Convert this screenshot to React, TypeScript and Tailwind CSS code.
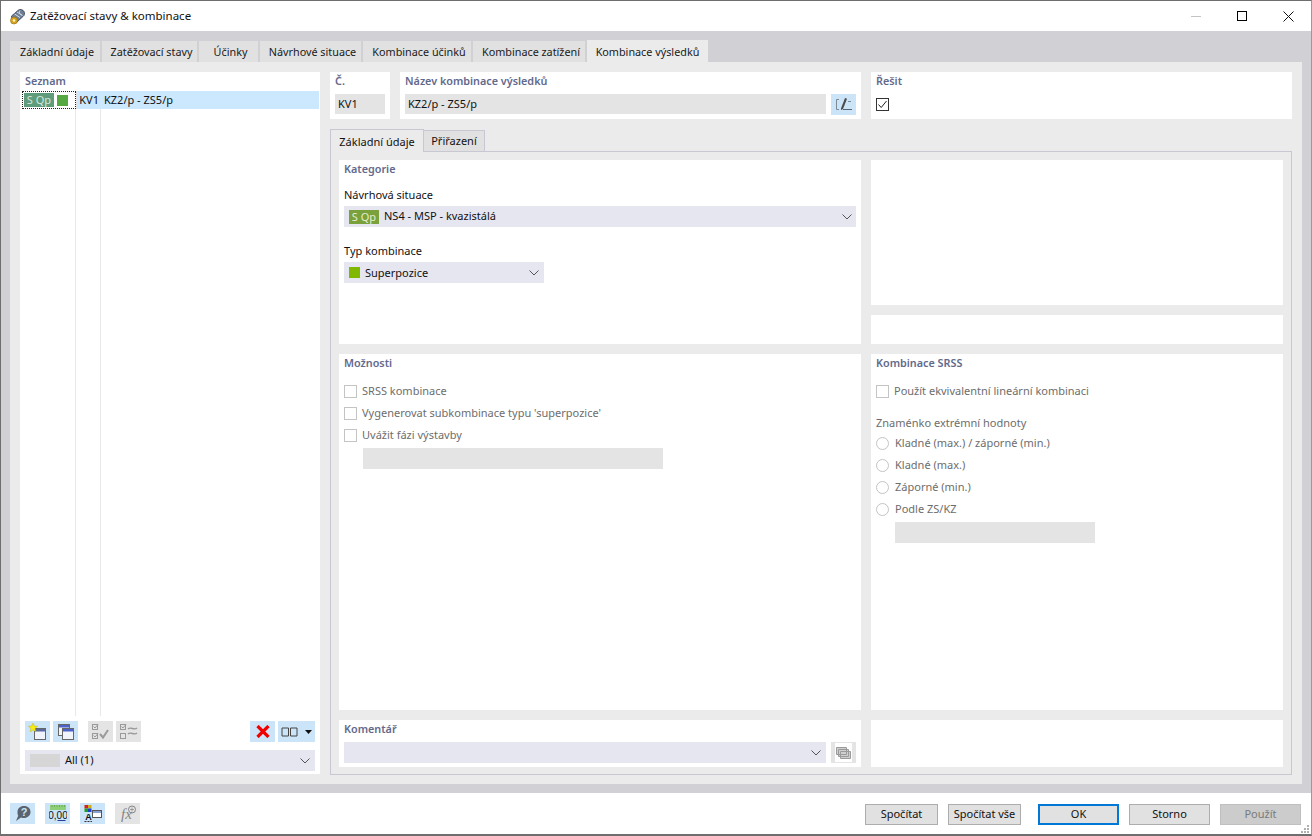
import React from "react";

const font = "font-['Noto_Sans','Liberation_Sans',sans-serif]";

function Tab({ label, w }: { label: string; w: string }) {
  return (
    <div className={`${w} h-[21px] pt-[1px] pl-[4px] flex items-center justify-center text-[10.8px] text-[#1a1a1a] border-r-2 border-[#d0d0d5] bg-[#e1e1e1]`}>
      {label}
    </div>
  );
}

function Heading({ children }: { children: React.ReactNode }) {
  return <div className="text-[10.8px] font-semibold text-[#63698c] leading-[14px]">{children}</div>;
}

function Check({ label }: { label: string }) {
  return (
    <div className="h-[22px] flex items-center gap-[5px] text-[11px] text-[#6d6d6d]">
      <span className="w-[13px] h-[13px] border border-[#c4c4c4] bg-white shrink-0" />
      {label}
    </div>
  );
}

function Radio({ label }: { label: string }) {
  return (
    <div className="h-[22px] flex items-center gap-[6px] text-[11px] text-[#6d6d6d]">
      <span className="w-[13px] h-[13px] border border-[#c4c4c4] rounded-full bg-white shrink-0" />
      {label}
    </div>
  );
}

function Chevron({ className = "" }: { className?: string }) {
  return (
    <svg width="10" height="6" viewBox="0 0 10 6" className={className}>
      <path d="M0.5 0.5 L5 5 L9.5 0.5" fill="none" stroke="#555" strokeWidth="1" />
    </svg>
  );
}

function IconBtn({ w = "w-[25px]", off, children }: { w?: string; off?: boolean; children: React.ReactNode }) {
  return (
    <div className={`${w} h-[21px] flex items-center justify-center shrink-0 ${off ? "bg-[#e4e4e4]" : "bg-[#cce4f7]"}`}>{children}</div>
  );
}

function Win({ x, y, bar = "#4a62c8" }: { x: number; y: number; bar?: string }) {
  return (
    <g>
      <rect x={x} y={y} width="11" height="11" fill="#f0f3fa" stroke="#666" />
      <rect x={x + 0.5} y={y + 0.5} width="10" height="2.5" fill={bar} />
    </g>
  );
}

function FootBtn({ w, children, primary, off }: { w: string; children: string; primary?: boolean; off?: boolean }) {
  return (
    <div
      className={`${w} h-[21px] flex items-center justify-center text-[11px] ${
        primary ? "border-2 border-[#0078d7] bg-[#e1e1e1] text-[#111]" : off ? "border border-[#bfbfbf] bg-[#cccccc] text-[#7a7a7a]" : "border border-[#adadad] bg-[#e1e1e1] text-[#111]"
      }`}
    >
      {children}
    </div>
  );
}

export default function App() {
  return (
    <div className={`${font} w-[1312px] h-[836px] overflow-hidden bg-white border-t border-l border-r border-b-2 border-[#6e6e6e] border-r-[#9a9a9a] flex flex-col relative`}>
      {/* title bar */}
      <div className="h-[30px] shrink-0 flex items-center pl-[8px] bg-white">
        <svg width="17" height="17" viewBox="0 0 17 17" className="shrink-0">
          <path d="M2.5 8 L9.5 2 C11 1 14 1.5 15 3.5 C16 5.5 15.5 7.5 14 8.5 L8 14 L3 13Z" fill="#6f7f95" stroke="#353f4f" strokeWidth="0.8" />
          <path d="M5.5 6 L11 9.5 M8 4 L13.5 7.5 M11 2.5 C9.5 4.5 11 7 13 7" stroke="#d3dce6" strokeWidth="1" fill="none" />
          <circle cx="5" cy="12.5" r="3.5" fill="#d9a520" stroke="#8a6a10" strokeWidth="0.6" />
          <circle cx="5" cy="12.5" r="1.2" fill="#fff3c0" />
        </svg>
        <span className="ml-[4px] text-[11.5px] text-[#111]">Zatěžovací stavy &amp; kombinace</span>
        <div className="ml-auto flex items-center">
          <div className="w-[46px] flex justify-center"><span className="w-[10px] h-px bg-[#c4c4c4]" /></div>
          <div className="w-[46px] flex justify-center"><span className="w-[10px] h-[10px] border border-black" /></div>
          <div className="w-[46px] flex justify-center">
            <svg width="11" height="11" viewBox="0 0 11 11"><path d="M0.5 0.5 L10.5 10.5 M10.5 0.5 L0.5 10.5" stroke="#111" strokeWidth="1" /></svg>
          </div>
        </div>
      </div>

      {/* gray band */}
      <div className="h-[762px] shrink-0 bg-[#d0d0d5] px-[9px] pt-[10px] flex flex-col">
        <div className="flex items-end h-[21px] shrink-0">
          <Tab label="Základní údaje" w="w-[92px]" />
          <Tab label="Zatěžovací stavy" w="w-[97px]" />
          <Tab label="Účinky" w="w-[61px]" />
          <Tab label="Návrhové situace" w="w-[103px]" />
          <Tab label="Kombinace účinků" w="w-[110px]" />
          <Tab label="Kombinace zatížení" w="w-[114px]" />
          <div className="w-[121px] h-[22px] pt-[2px] flex items-center justify-center text-[10.8px] text-[#1a1a1a] bg-[#ebebeb]">Kombinace výsledků</div>
        </div>

        <div className="w-[1292px] h-[722px] bg-[#ebebeb] p-[10px] flex gap-[10px]">
          {/* left list */}
          <div className="w-[300px] h-[702px] bg-white flex flex-col pl-[2px] pr-[1px] shrink-0">
            <div className="h-[19px] px-[3px] pt-[2px] shrink-0"><Heading>Seznam</Heading></div>
            <div className="h-[18px] bg-[#cce8ff] flex items-center text-[11px] text-[#111] shrink-0">
              <div className="w-[54px] h-full border border-dotted border-[#222] flex items-center pl-[1px] gap-[3px] bg-white shrink-0">
                <span className="w-[30px] h-[14px] bg-[#5e9c7c] text-[#d5e6dc] text-[11px] leading-[14px] text-center">S Qp</span>
                <span className="w-[11px] h-[11px] bg-[#55a940]" />
              </div>
              <span className="w-[25px] h-full border-l border-[#e4e4e4] flex items-center justify-end pr-[2px]">KV1</span>
              <span className="h-full border-l border-[#e4e4e4] flex items-center pl-[2px]">KZ2/p - ZS5/p</span>
            </div>
            <div className="flex-1 flex">
              <div className="w-[54px] border-r border-[#e8e8e8]" />
              <div className="w-[25px] border-r border-[#e8e8e8]" />
            </div>
            <div className="h-[21px] ml-[3px] mr-[4px] mt-[5px] flex shrink-0">
              <IconBtn>
                <svg width="20" height="18" viewBox="0 0 20 18">
                  <Win x={6.5} y={5.5} bar="#5a6a9a" />
                  <polygon points="5,0 6.3,3 9.5,3.3 7.1,5.4 7.9,8.7 5,7 2.1,8.7 2.9,5.4 0.5,3.3 3.7,3" fill="#f7ec18" stroke="#b8a800" strokeWidth="0.4" />
                </svg>
              </IconBtn>
              <span className="w-[3px]" />
              <IconBtn>
                <svg width="20" height="18" viewBox="0 0 20 18"><Win x={2.5} y={1.5} /><Win x={6.5} y={5.5} /></svg>
              </IconBtn>
              <span className="w-[10px]" />
              <IconBtn off>
                <svg width="20" height="18" viewBox="0 0 20 18" fill="none" stroke="#9a9a9a"><rect x="1.5" y="1.5" width="5" height="5" /><rect x="1.5" y="10.5" width="5" height="5" /><path d="M9 11 L12 14.5 L17 7" strokeWidth="2" /><path d="M2.5 3.5 L4 5 L7 1.5 M2.5 12.5 L4 14 L7 10.5" /></svg>
              </IconBtn>
              <span className="w-[3px]" />
              <IconBtn off>
                <svg width="20" height="18" viewBox="0 0 20 18" fill="none" stroke="#9a9a9a"><rect x="1.5" y="1.5" width="5" height="5" /><rect x="1.5" y="10.5" width="5" height="5" /><path d="M2.5 3.5 L4 5 L7 1.5" /><path d="M9 6 C12 3 15 8 18 5 M9 11 C12 8 15 13 18 10" strokeWidth="1.4" /></svg>
              </IconBtn>
              <span className="flex-1" />
              <IconBtn>
                <svg width="14" height="13" viewBox="0 0 14 13"><path d="M1.5 1 L12.5 12 M12.5 1 L1.5 12" stroke="#f00000" strokeWidth="3.2" /></svg>
              </IconBtn>
              <span className="w-[3px]" />
              <IconBtn w="w-[37px]">
                <div className="flex items-center">
                  <svg width="17" height="10" viewBox="0 0 17 10"><path d="M1 1 H7.5 V9 H1Z M9.5 1 H16 V9 H9.5Z" fill="none" stroke="#444" /></svg>
                  <svg width="7" height="4" viewBox="0 0 7 4" className="ml-[7px]"><path d="M0 0 H7 L3.5 4Z" fill="#111" /></svg>
                </div>
              </IconBtn>
            </div>
            <div className="h-[21px] ml-[3px] mr-[4px] mt-[8px] mb-[3px] bg-[#e6e6f0] flex items-center px-[5px] text-[11px] text-[#111] shrink-0">
              <span className="w-[30px] h-[13px] bg-[#d6d6d6] mr-[5px]" />
              All (1)
              <Chevron className="ml-auto" />
            </div>
          </div>

          {/* right */}
          <div className="w-[962px] h-[703px] flex flex-col shrink-0">
            <div className="h-[47px] flex gap-[10px] shrink-0">
              <div className="w-[60px] bg-white px-[5px] pt-[2px]">
                <Heading>Č.</Heading>
                <div className="h-[20px] w-[50px] mt-[6px] bg-[#e4e4e4] flex items-center px-[3px] text-[11px] text-[#111]">KV1</div>
              </div>
              <div className="w-[461px] bg-white px-[5px] pt-[2px]">
                <Heading>Název kombinace výsledků</Heading>
                <div className="flex gap-[5px] mt-[6px]">
                  <div className="h-[20px] w-[421px] bg-[#e4e4e4] flex items-center px-[3px] text-[11px] text-[#111]">KZ2/p - ZS5/p</div>
                  <div className="w-[25px] h-[21px] bg-[#cce4f7] flex items-center justify-center">
                    <svg width="18" height="15" viewBox="0 0 18 15" fill="none"><path d="M4 2.5 H1.5 V12.5 H4" stroke="#7b8b98" /><path d="M8 12.5 H17" stroke="#5a6570" /><path d="M6 11.5 L10 1 L12 1.8 L8 12 L6 13Z" fill="#4a4a4a" /><path d="M13 4.5 H16" stroke="#7b8b98" /></svg>
                  </div>
                </div>
              </div>
              <div className="w-[421px] bg-white px-[5px] pt-[2px]">
                <Heading>Řešit</Heading>
                <div className="w-[13px] h-[13px] border border-[#333] mt-[10px] flex items-center justify-center">
                  <svg width="11" height="11" viewBox="0 0 11 11"><path d="M1.5 5.5 L4.2 8.5 L9.5 2" fill="none" stroke="#222" /></svg>
                </div>
              </div>
            </div>

            <div className="flex h-[22px] mt-[10px] items-end shrink-0">
              <div className="w-[94px] h-[23px] -mb-px pt-[2px] relative z-10 bg-[#ebebeb] border border-b-0 border-[#c8c8d2] flex items-center justify-center text-[11px] text-[#111]">Základní údaje</div>
              <div className="w-[61px] h-[21px] pt-[1px] bg-[#e1e1e1] border border-l-0 border-b-0 border-[#c8c8d2] flex items-center justify-center text-[11px] text-[#111]">Přiřazení</div>
            </div>

            <div className="w-[962px] h-[624px] border border-[#c8c8d2] bg-[#ebebeb] p-[8px] grid grid-cols-[522px_412px] gap-x-[10px] grid-rows-[145px_29px_356px_47px] gap-y-[10px] shrink-0">
              <div className="row-span-2 bg-white px-[5px] pt-[2px] text-[11px] text-[#111]">
                <Heading>Kategorie</Heading>
                <div className="mt-[11px] leading-[15px]">Návrhová situace</div>
                <div className="mt-[4px] h-[21px] w-[512px] bg-[#e6e6f0] flex items-center pl-[5px] pr-[4px]">
                  <span className="w-[30px] h-[14px] bg-[#7aa13c] text-[#e4eecf] leading-[14px] text-center">S Qp</span>
                  <span className="ml-[5px]">NS4 - MSP - kvazistálá</span>
                  <Chevron className="ml-auto" />
                </div>
                <div className="mt-[16px] leading-[15px]">Typ kombinace</div>
                <div className="mt-[4px] h-[21px] w-[200px] bg-[#e6e6f0] flex items-center pl-[5px] pr-[5px]">
                  <span className="w-[11px] h-[11px] bg-[#80b800]" />
                  <span className="ml-[5px] pt-[1px]">Superpozice</span>
                  <Chevron className="ml-auto" />
                </div>
              </div>
              <div className="bg-white" />
              <div className="bg-white" />

              <div className="bg-white px-[5px] pt-[2px]">
                <Heading>Možnosti</Heading>
                <div className="mt-[10px]">
                  <Check label="SRSS kombinace" />
                  <Check label="Vygenerovat subkombinace typu 'superpozice'" />
                  <Check label="Uvážit fázi výstavby" />
                </div>
                <div className="ml-[19px] mt-[2px] w-[300px] h-[21px] bg-[#e4e4e4]" />
              </div>
              <div className="bg-white px-[5px] pt-[2px]">
                <Heading>Kombinace SRSS</Heading>
                <div className="mt-[10px]"><Check label="Použít ekvivalentní lineární kombinaci" /></div>
                <div className="mt-[13px] h-[15px] leading-[15px] text-[11px] text-[#6d6d6d]">Znaménko extrémní hodnoty</div>
                <div className="mt-[2px]">
                  <Radio label="Kladné (max.) / záporné (min.)" />
                  <Radio label="Kladné (max.)" />
                  <Radio label="Záporné (min.)" />
                  <Radio label="Podle ZS/KZ" />
                </div>
                <div className="ml-[19px] mt-[2px] w-[200px] h-[21px] bg-[#e4e4e4]" />
              </div>

              <div className="bg-white px-[5px] pt-[2px]">
                <Heading>Komentář</Heading>
                <div className="flex gap-[5px] mt-[6px]">
                  <div className="w-[482px] h-[21px] bg-[#e6e6f0] flex items-center pr-[5px]"><Chevron className="ml-auto" /></div>
                  <div className="w-[25px] h-[21px] bg-[#e4e4e4] flex items-center justify-center">
                    <svg width="17" height="19" viewBox="0 0 17 19" className="bg-white"><path d="M1.5 4.5 H11.5 V11.5 H1.5Z M3.5 6.5 H13.5 V13.5 H3.5Z M5.5 8.5 H15.5 V15.5 H5.5Z" fill="#cfcfcf" stroke="#9a9a9a" /></svg>
                  </div>
                </div>
              </div>
              <div className="bg-white" />
            </div>
          </div>
        </div>
      </div>

      {/* footer */}
      <div className="flex-1 flex items-start pt-[10px] pl-[9px] relative">
        <div className="flex gap-[10px]">
          <IconBtn>
            <svg width="18" height="17" viewBox="0 0 18 17"><path d="M10 1 C14 1 16.5 3.5 16.5 7 C16.5 10.5 13.5 13 10 13 C9 13 8 12.8 7 12.4 L2 16 L4.2 10.8 C3.6 9.8 3.5 8.5 3.5 7 C3.5 3.5 6 1 10 1Z" fill="#5a6470" /><text x="10" y="11" textAnchor="middle" fontSize="11" fontWeight="700" fill="#cce4f7" fontFamily="Liberation Sans">?</text></svg>
          </IconBtn>
          <IconBtn>
            <svg width="18" height="20" viewBox="0 0 18 20"><rect x="1" y="1" width="16" height="5" fill="#8ed07a" /><path d="M3 1 V3 M5.5 1 V3 M8 1 V3 M10.5 1 V3 M13 1 V3 M15.5 1 V3" stroke="#5f9e4c" strokeWidth="0.7" /><text x="9" y="15" textAnchor="middle" fontSize="10" fill="#111" fontFamily="Liberation Sans">0,00</text><path d="M8.5 16.5 H16.5" stroke="#2a3f9a" /></svg>
          </IconBtn>
          <IconBtn>
            <svg width="22" height="20" viewBox="0 0 22 20">
              <rect x="2.5" y="1" width="3.5" height="3.5" fill="#d42020" /><rect x="6" y="1" width="3.5" height="3.5" fill="#c8b020" /><rect x="2.5" y="4.5" width="3.5" height="3.5" fill="#20a020" /><rect x="6" y="4.5" width="3.5" height="3.5" fill="#2040d0" />
              <text x="6.5" y="15.5" textAnchor="middle" fontSize="9" fontWeight="700" fill="#111" fontFamily="Liberation Sans">A</text>
              <path d="M2.5 17.5 H10" stroke="#333" strokeDasharray="2 1" />
              <rect x="10.5" y="6.5" width="9" height="7" fill="#fff" stroke="#555" /><rect x="11" y="7" width="8" height="2" fill="#8aa0d0" />
            </svg>
          </IconBtn>
          <IconBtn off>
            <svg width="22" height="20" viewBox="0 0 22 20"><text x="4" y="15" fontSize="15" fontStyle="italic" fill="#858585" fontFamily="Liberation Serif">fx</text><circle cx="15" cy="5.5" r="3.5" fill="none" stroke="#858585" /><path d="M15 3.5 V7.5 M13 5.5 H17" stroke="#858585" strokeWidth="0.7" /></svg>
          </IconBtn>
        </div>
        <div className="ml-auto mr-[10px] mt-[1px] flex">
          <FootBtn w="w-[73px]">Spočítat</FootBtn>
          <span className="w-[10px]" />
          <FootBtn w="w-[73px]">Spočítat vše</FootBtn>
          <span className="w-[17px]" />
          <FootBtn w="w-[81px]" primary>OK</FootBtn>
          <span className="w-[10px]" />
          <FootBtn w="w-[81px]">Storno</FootBtn>
          <span className="w-[10px]" />
          <FootBtn w="w-[81px]" off>Použít</FootBtn>
        </div>
        <svg width="10" height="10" viewBox="0 0 10 10" className="absolute right-[1px] bottom-0">
          <g fill="#b0b0b0"><rect x="7" y="1" width="2" height="2" /><rect x="4" y="4" width="2" height="2" /><rect x="7" y="4" width="2" height="2" /><rect x="1" y="7" width="2" height="2" /><rect x="4" y="7" width="2" height="2" /><rect x="7" y="7" width="2" height="2" /></g>
        </svg>
      </div>
    </div>
  );
}
